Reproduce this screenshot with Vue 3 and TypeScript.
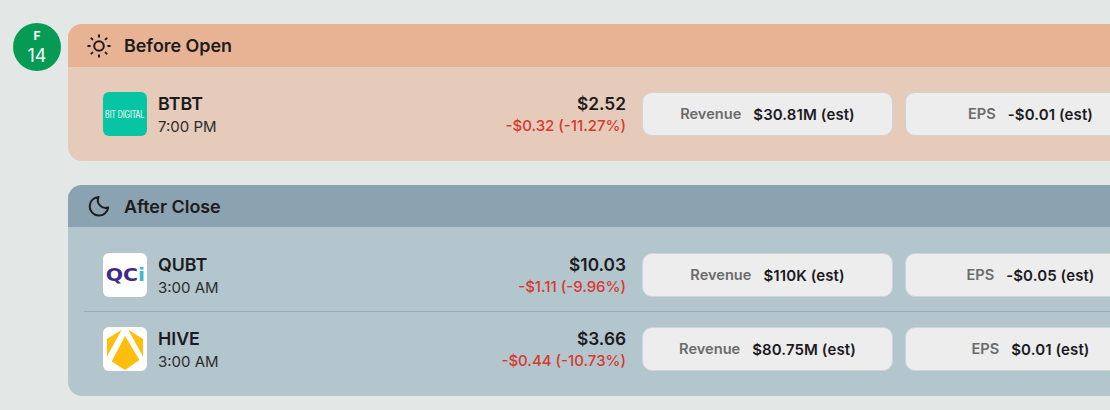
<script setup lang="ts">
interface Row {
  sym: string
  time: string
  price: string
  change: string
  revenue: string
  eps: string
  logo: 'bit' | 'qci' | 'hive'
}
const before: Row[] = [
  { sym: 'BTBT', time: '7:00 PM', price: '$2.52', change: '-$0.32 (-11.27%)', revenue: '$30.81M (est)', eps: '-$0.01 (est)', logo: 'bit' },
]
const after: Row[] = [
  { sym: 'QUBT', time: '3:00 AM', price: '$10.03', change: '-$1.11 (-9.96%)', revenue: '$110K (est)', eps: '-$0.05 (est)', logo: 'qci' },
  { sym: 'HIVE', time: '3:00 AM', price: '$3.66', change: '-$0.44 (-10.73%)', revenue: '$80.75M (est)', eps: '$0.01 (est)', logo: 'hive' },
]
const sections = [
  { title: 'Before Open', kind: 'am', rows: before },
  { title: 'After Close', kind: 'pm', rows: after },
]
</script>

<template>
  <div class="page">
    <div class="date">
      <span class="dow">F</span>
      <span class="dom">14</span>
    </div>
    <div class="sections">
      <section v-for="s in sections" :key="s.title" class="card" :class="s.kind">
        <header class="head">
          <svg v-if="s.kind === 'am'" class="ico" viewBox="0 0 26 26" fill="none" stroke="#1c1b1f" stroke-width="2" stroke-linecap="round">
            <circle cx="13" cy="13" r="4.8" />
            <path d="M13 2.2v1.6M13 22.2v1.6M2.2 13h1.6M22.2 13h1.6M5.4 5.4l1 1M19.6 19.6l1 1M5.4 20.6l1-1M19.6 6.4l1-1" />
          </svg>
          <svg v-else class="ico" viewBox="0 0 26 26" fill="none" stroke="#1c1b1f" stroke-width="2" stroke-linejoin="round">
            <path d="M12.5 4A9.3 9.3 0 1 0 22.2 14.5 7.8 7.8 0 0 1 12.5 4Z" />
          </svg>
          <span class="title">{{ s.title }}</span>
        </header>
        <div class="body">
          <div v-for="r in s.rows" :key="r.sym" class="row">
            <div class="logo" :class="r.logo">
              <span v-if="r.logo === 'bit'" class="bit-text">BIT DIGITAL</span>
              <span v-else-if="r.logo === 'qci'" class="qci-text">QC<span class="qci-i">i</span></span>
              <svg v-else viewBox="0 0 44 44" width="44" height="44">
                <path d="M4 12 18.7 2.7 4 29.5Z" fill="#ffbe0b" />
                <path d="M25.3 2.7 40 12v17.5Z" fill="#ffbe0b" />
                <path d="M22 9 36.5 33 22 43 8.7 34.5Z" fill="#ffbe0b" />
              </svg>
            </div>
            <div class="who">
              <div class="sym">{{ r.sym }}</div>
              <div class="time">{{ r.time }}</div>
            </div>
            <div class="quote">
              <div class="price">{{ r.price }}</div>
              <div class="change">{{ r.change }}</div>
            </div>
            <div class="pill"><span class="lab">Revenue</span><span class="val">{{ r.revenue }}</span></div>
            <div class="pill"><span class="lab">EPS</span><span class="val">{{ r.eps }}</span></div>
          </div>
        </div>
      </section>
    </div>
  </div>
</template>

<style>
html, body {
  margin: 0;
  background: #e3e8e6;
  overflow: hidden;
}
</style>

<style scoped>
.page {
  display: flex;
  align-items: flex-start;
  gap: 7px;
  width: 1110px;
  height: 410px;
  padding: 23px 0 0 13px;
  box-sizing: border-box;
  overflow: hidden;
  font-family: "Inter", "Noto Sans", sans-serif;
  color: #1c1b1f;
}
.date {
  flex: none;
  width: 48px;
  height: 48px;
  padding-top: 6px;
  box-sizing: border-box;
  border-radius: 50%;
  background: #059b55;
  color: #fff;
  display: flex;
  flex-direction: column;
  align-items: center;
}
.dow { font-size: 12px; font-weight: 700; line-height: 14px; }
.dom { font-size: 18px; line-height: 24px; margin-top: 1px; }
.sections {
  flex: none;
  width: 1100px;
  margin-top: 1px;
  display: flex;
  flex-direction: column;
  gap: 24px;
}
.card { border-radius: 14px; overflow: hidden; }
.am { background: #e6cbba; }
.am .head { background: #e8b394; height: 43px; }
.pm { background: #b3c6cd; }
.pm .head { background: #8ba2b0; height: 42px; }
.head { display: flex; align-items: center; padding-left: 18px; gap: 12px; }
.ico { width: 26px; height: 26px; flex: none; }
.title { font-size: 17.9px; font-weight: 600; }
.body { padding: 25px 16px; }
.pm .body { padding-top: 26px; }
.row {
  display: flex;
  align-items: flex-start;
  height: 44px;
  padding-left: 19px;
}
.row + .row {
  margin-top: 14px;
  padding-top: 15px;
  border-top: 1px solid #96adb7;
}
.logo {
  flex: none;
  width: 44px;
  height: 44px;
  border-radius: 6px;
  background: #fff;
  display: flex;
  align-items: center;
  justify-content: center;
  overflow: hidden;
}
.logo.bit { background: #07c5a4; }
.bit-text {
  color: #fff;
  font: 400 10.5px "Liberation Sans", sans-serif;
  transform: scaleX(0.66);
  white-space: nowrap;
}
.qci-text {
  color: #3d2a8c;
  font: 700 17px "DejaVu Sans", sans-serif;
  transform: scaleX(1.2);
  white-space: nowrap;
}
.qci-i { color: #47b6c9; }
.who { width: 120px; margin-left: 11px; flex: none; }
.sym { font-size: 17.8px; font-weight: 600; line-height: 24px; }
.time { font-size: 15px; line-height: 22px; color: #2c2c2c; }
.quote { width: 348px; flex: none; text-align: right; }
.price { font-size: 17.3px; font-weight: 600; line-height: 24px; }
.change { font-size: 15px; font-weight: 500; line-height: 20px; color: #d8392f; }
.pill {
  flex: none;
  width: 251px;
  height: 44px;
  margin-left: 16px;
  box-sizing: border-box;
  background: #ededed;
  border: 1px solid #ced5d9;
  border-radius: 10px;
  display: flex;
  align-items: center;
  justify-content: center;
  gap: 12px;
}
.pill + .pill { margin-left: 12px; }
.lab { color: #6b6b6b; font-weight: 600; font-size: 14.6px; }
.val { color: #1c1b1f; font-weight: 600; font-size: 15px; letter-spacing: 0.1px; }
</style>
